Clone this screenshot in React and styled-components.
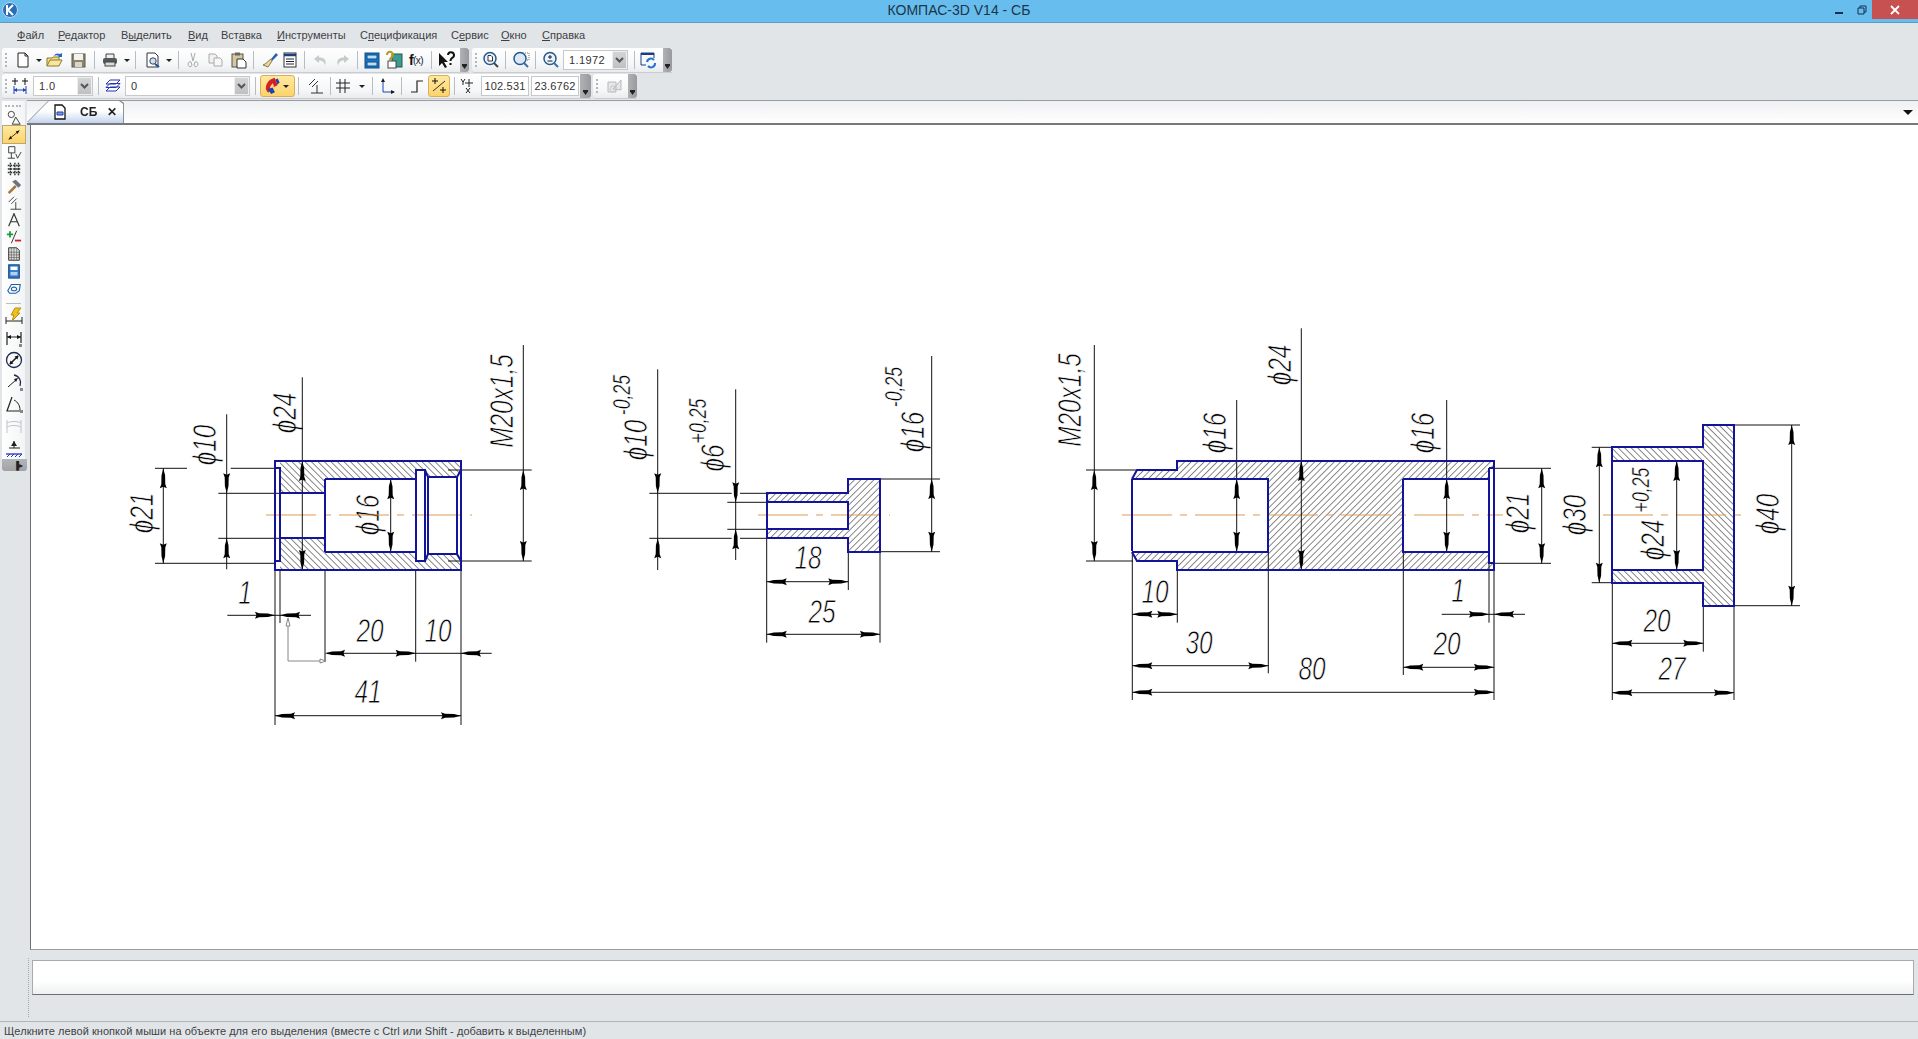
import React from "react";
import styled, { createGlobalStyle } from "styled-components";

const GlobalStyle = createGlobalStyle`
  html, body { margin: 0; padding: 0; background: #e2e5e8; overflow: hidden; }
  * { box-sizing: border-box; }
`;

const Win = styled.div`
  width: 1918px;
  height: 1039px;
  display: flex;
  flex-direction: column;
  background: #e2e5e8;
  font-family: "Liberation Sans", Arial, sans-serif;
  color: #333;
  overflow: hidden;
`;

// title bar
const TitleBar = styled.div`
  height: 23px;
  flex: none;
  display: flex;
  align-items: flex-start;
  justify-content: space-between;
  background: #67bdee;
  border-bottom: 1px solid #5a9cc4;
`;
const AppIcon = styled.div`
  width: 92px;
  height: 20px;
  padding: 2px 0 0 2px;
`;
const Title = styled.div`
  font-size: 14px;
  line-height: 21px;
  color: #1c3648;
`;
const WinBtns = styled.div`
  display: flex;
  align-items: flex-start;
  width: 92px;
`;
const WinBtn = styled.div`
  width: ${(p) => p.$w}px;
  height: 19px;
  display: flex;
  align-items: center;
  justify-content: center;
  background: ${(p) => p.$bg || "transparent"};
`;

// menu
const MenuBar = styled.div`
  height: 24px;
  flex: none;
  display: flex;
  align-items: center;
  padding-left: 17px;
  font-size: 11px;
  color: #3d4144;
`;
const MenuItem = styled.span`
  width: ${(p) => p.$w}px;
  flex: none;
  white-space: nowrap;
`;

// toolbars
const ToolStack = styled.div`
  flex: none;
  padding-top: 1px;
`;
const ToolRow = styled.div`
  height: 26px;
  display: flex;
  align-items: stretch;
  padding-left: 2px;
  gap: ${(p) => p.$gap || 0}px;
`;
const ToolGroup = styled.div`
  height: 25px;
  display: flex;
  align-items: center;
  background: linear-gradient(#ffffff, #f5f6f7 70%, #e9ebed);
  border-radius: 3px 0 0 3px;
  border-bottom: 1px solid #c9ccd0;
`;
const Grip = styled.div`
  width: ${(p) => p.$w}px;
  height: 100%;
  flex: none;
  position: relative;
  &::before {
    content: "";
    position: absolute;
    left: 3px;
    top: 5px;
    bottom: 5px;
    border-left: 2px dotted #b4b7ba;
  }
`;
const EndGrip = styled.div`
  width: ${(p) => p.$w}px;
  height: 100%;
  flex: none;
  background: linear-gradient(90deg, #b0b2b5, #97999c);
  border-radius: 0 3px 3px 0;
  display: flex;
  align-items: flex-end;
  justify-content: center;
  padding-bottom: 3px;
  &::after {
    content: "";
    width: 5px;
    height: 5px;
    clip-path: polygon(0 0, 100% 0, 100% 30%, 50% 100%, 0 30%);
    background-color: #222;
  }
`;
const Btn = styled.div`
  width: ${(p) => p.$w}px;
  height: ${(p) => p.$h || 22}px;
  flex: none;
  display: flex;
  align-items: center;
  justify-content: center;
  ${(p) =>
    p.$on &&
    `background: linear-gradient(#ffe9a0, #fdd36a);
     border: 1px solid #d9ae5c;
     border-radius: 3px;`}
`;
const FxBtn = styled(Btn)`
  font-size: 10px;
  color: #223;
  letter-spacing: -0.6px;
  white-space: nowrap;
  b {
    font-size: 14px;
    color: #111;
  }
`;
const Sep = styled.div`
  width: ${(p) => p.$w}px;
  height: 18px;
  flex: none;
  display: flex;
  justify-content: center;
  &::before {
    content: "";
    width: 1px;
    background: #b9bcc0;
  }
`;
const Pad = styled.div`
  width: ${(p) => p.$w}px;
  flex: none;
`;
const DropArrow = styled.div`
  width: ${(p) => p.$w}px;
  flex: none;
  display: flex;
  justify-content: center;
  &::before {
    content: "";
    flex: none;
    border-left: 3px solid transparent;
    border-right: 3px solid transparent;
    border-top: 3px solid #222;
  }
`;
const Combo = styled.div`
  width: ${(p) => p.$w}px;
  height: 20px;
  flex: none;
  display: flex;
  background: #fff;
  border: 1px solid #c6c8ca;
  font-size: 11px;
  line-height: 18px;
  color: #333;
`;
const ComboText = styled.div`
  flex: 1;
  padding-left: 5px;
  letter-spacing: 0.4px;
  white-space: nowrap;
`;
const ComboBtn = styled.div`
  width: 15px;
  flex: none;
  background: linear-gradient(#d4d5d7, #bfc0c2);
  border: 1px solid #eee;
  display: flex;
  align-items: center;
  justify-content: center;
`;
const Field = styled.div`
  width: ${(p) => p.$w}px;
  height: 20px;
  flex: none;
  background: #fff;
  border: 1px solid #c6c8ca;
  font-size: 11px;
  line-height: 18px;
  text-align: center;
  letter-spacing: 0.2px;
  color: #333;
`;

// workspace
const Work = styled.div`
  flex: 1;
  min-height: 0;
  display: flex;
`;
const LeftStrip = styled.div`
  width: 27px;
  flex: none;
  padding-left: 2px;
`;
const LeftTools = styled.div`
  width: 23px;
  background: linear-gradient(90deg, #fff, #f3f4f5);
  padding-top: 8px;
  margin-top: 1px;
  display: flex;
  flex-direction: column;
  align-items: center;
  position: relative;
  &::before {
    content: "";
    position: absolute;
    top: 4px;
    left: 3px;
    right: 4px;
    border-top: 2px dotted #b4b7ba;
  }
`;
const LeftBtn = styled.div`
  width: 22px;
  height: ${(p) => p.$h}px;
  flex: none;
  display: flex;
  align-items: center;
  justify-content: center;
  ${(p) =>
    p.$on &&
    `background: linear-gradient(#ffe9a0, #fdd36a);
     outline: 1px solid #b9a96f;`}
`;
const LeftSep = styled.div`
  width: 15px;
  height: 8px;
  flex: none;
  border-bottom: 1px solid #b9bcc0;
  margin-bottom: 1px;
`;
const LeftEnd = styled.div`
  width: 25px;
  height: 12px;
  background: linear-gradient(#b4b6b9, #9fa1a4);
  border-radius: 0 0 3px 3px;
  display: flex;
  align-items: center;
  justify-content: flex-end;
  padding-right: 4px;
  color: #222;
  font-size: 8px;
`;
const MainCol = styled.div`
  flex: 1;
  min-width: 0;
  display: flex;
  flex-direction: column;
`;
const TabBar = styled.div`
  height: 25px;
  flex: none;
  display: flex;
  align-items: flex-end;
  justify-content: space-between;
  background: linear-gradient(#eff0f2, #ffffff);
  border-top: 1px solid #9b9c9e;
  border-bottom: 2px solid #77797b;
`;
const TabEdge = styled.div`
  filter: drop-shadow(0 -1px 0 #8e9296) drop-shadow(1px 0 0 #8e9296);
`;
const Tab = styled.div`
  width: 96px;
  height: 22px;
  display: flex;
  align-items: center;
  padding-left: 26px;
  background: linear-gradient(#ffffff 45%, #c3d4ef);
  clip-path: polygon(0 100%, 22px 0, 92px 0, 96px 3px, 96px 100%);
  font-size: 12px;
  font-weight: bold;
  color: #222;
`;
const TabName = styled.span`
  margin-left: 13px;
`;
const TabClose = styled.span`
  margin-left: 10px;
  font-size: 12px;
`;
const TabMenu = styled.div`
  margin: 0 5px 8px 0;
  border-left: 5px solid transparent;
  border-right: 5px solid transparent;
  border-top: 5px solid #111;
`;
const Canvas = styled.div`
  flex: 1;
  min-height: 0;
  background: #fff;
  border-left: 1px solid #6d6f72;
  margin-left: 3px;
  border-bottom: 1px solid #9b9d9f;
`;
const Sheet = styled.svg`
  display: block;
  width: 100%;
  height: 100%;
`;
const Label = styled.text`
  font-family: "Liberation Sans", Arial, sans-serif;
  font-style: italic;
  fill: #000;
  stroke: #fff;
  stroke-width: ${(p) => p.$thin};
  text-anchor: middle;
  dominant-baseline: central;
`;

// command and status
const CommandRow = styled.div`
  height: 71px;
  flex: none;
  padding: 10px 4px 0 32px;
  position: relative;
  &::before {
    content: "";
    position: absolute;
    left: 28px;
    top: 8px;
    bottom: 4px;
    border-left: 1px dotted #a6a8ab;
  }
`;
const CommandBox = styled.div`
  height: 35px;
  background: linear-gradient(#ffffff 60%, #eef0f1);
  border: 1px solid #a8aaac;
  border-bottom: 1px solid #6d6f72;
`;
const StatusBar = styled.div`
  height: 18px;
  flex: none;
  border-top: 1px solid #b2b4b6;
  font-size: 11px;
  line-height: 18px;
  letter-spacing: 0.05px;
  padding-left: 4px;
  color: #3e4144;
`;

const Ic = styled.svg`
  display: block;
  flex: none;
  overflow: visible;
`;

const I = ({ s = 18, children }) => (
  <Ic width={s} height={s} viewBox="0 0 18 18" fill="none" strokeWidth="1">
    {children}
  </Ic>
);

const icons = {
  doc: <path d="M4 2h7l3 3v11H4zM11 2v3h3" stroke="#222" fill="#fff" />,
  open: (
    <>
      <path d="M1 15V7h5l1-1h6v3" stroke="#8d7a2c" fill="#f5dd86" />
      <path d="M1 15l3-6h12l-3 6z" stroke="#8d7a2c" fill="#f8e6a0" />
      <path d="M8 5c1-3 4-3 6-2l2-1v4h-4l1-1c-2-1-3-1-5 0z" fill="#2369c2" />
    </>
  ),
  save: (
    <>
      <rect x="3" y="3" width="13" height="13" fill="#8b8570" stroke="#5f5b4a" />
      <rect x="5" y="3" width="9" height="6" fill="#f2f2ee" />
      <rect x="6" y="11" width="7" height="5" fill="#d9d6c8" />
    </>
  ),
  print: (
    <>
      <path d="M5 7V3h8v4" stroke="#444" fill="#eee" />
      <rect x="2" y="7" width="14" height="6" rx="2" fill="#55585a" />
      <rect x="4" y="11" width="10" height="4" fill="#d9dadb" stroke="#444" />
    </>
  ),
  preview: (
    <>
      <path d="M3 2h8l3 3v11H3z" stroke="#334" fill="#fff" />
      <circle cx="9" cy="10" r="3.2" stroke="#345" fill="#cfe0f2" />
      <path d="M11 13l4 3" stroke="#1b4e93" strokeWidth="2" />
    </>
  ),
  cut: (
    <path d="M7 2l2 8M11 2L9 10M7 11a2 2.500 0 1 0 1 3zM11 11a2 2.500 0 1 1-1 3z" stroke="#a8aaac" />
  ),
  copy: (
    <>
      <path d="M3 3h6l2 2v7H3z" stroke="#aaa" fill="#f2f2f2" />
      <path d="M8 7h6l2 2v6H8z" stroke="#aaa" fill="#f7f7f7" />
    </>
  ),
  paste: (
    <>
      <rect x="3" y="3" width="11" height="13" stroke="#555" fill="#d6c89b" />
      <rect x="6" y="1.500" width="5" height="3" fill="#666" />
      <path d="M8 8h6l3 3v6H8z" stroke="#333" fill="#fff" />
    </>
  ),
  brush: (
    <>
      <path d="M10 8l5-6 2 2-6 6z" fill="#2c5fa8" />
      <path d="M10 8l1 2-4 6-5-2c3-1 5-4 8-6z" fill="#e9d69a" stroke="#8c7b45" />
    </>
  ),
  table: (
    <>
      <rect x="3" y="2" width="12" height="14" stroke="#333" fill="#fff" />
      <path d="M3 4h12" stroke="#1d3f7c" strokeWidth="2.500" />
      <path d="M5 8h8M5 10.500h8M5 13h8" stroke="#223" />
    </>
  ),
  undo: <path d="M6 4L1 8l5 4V9.500c3 0 5 1 6 5 2-6-1-8-6-8z" fill="#c9cacb" />,
  redo: <path d="M12 4l5 4-5 4V9.500c-3 0-5 1-6 5-2-6 1-8 6-8z" fill="#c9cacb" />,
  cabinet: (
    <>
      <rect x="2" y="2" width="14" height="15" fill="#1b78c4" stroke="#0d4d88" />
      <rect x="4" y="4" width="10" height="4" fill="#bcdcf4" stroke="#0d4d88" />
      <rect x="4" y="11" width="10" height="4" fill="#bcdcf4" stroke="#0d4d88" />
    </>
  ),
  tree: (
    <>
      <rect x="7" y="3" width="10" height="13" fill="#3b9c8f" stroke="#1d5b56" />
      <rect x="3" y="10" width="8" height="7" fill="#fff" stroke="#444" />
      <path d="M2 4a3 3 0 1 1 5 2c-1 1-2 1-2 3" stroke="#b89a18" strokeWidth="2" />
    </>
  ),
  help: (
    <>
      <path d="M2 2v13l3-3 3 5 2-1-3-5h4z" fill="#111" />
      <path d="M11 4a3 3 0 1 1 4 3c-1 1-1.500 1-1.500 3M13.500 12v2" stroke="#111" strokeWidth="2" />
    </>
  ),
  zoomDoc: (
    <>
      <circle cx="8" cy="7.500" r="6" stroke="#245a8e" fill="#edf3fa" strokeWidth="1.500" />
      <path d="M6 4.500h3l1.500 1.500v4H6z" stroke="#333" fill="#fff" />
      <path d="M12 12l4 4" stroke="#444" strokeWidth="2" />
    </>
  ),
  zoomBox: (
    <>
      <circle cx="8" cy="7.500" r="6" stroke="#245a8e" fill="#dbe8f6" strokeWidth="1.500" />
      <path d="M11 2h6v7h-5" stroke="#777" strokeDasharray="1 1" />
      <path d="M12 12l4 4" stroke="#3f6fa6" strokeWidth="2" />
    </>
  ),
  zoomPm: (
    <>
      <circle cx="8" cy="7.500" r="6" stroke="#245a8e" fill="#edf3fa" strokeWidth="1.500" />
      <path d="M8 4v4M6 6h4M5.500 10h5" stroke="#123" />
      <path d="M12 12l4 4" stroke="#3f6fa6" strokeWidth="2" />
    </>
  ),
  refresh: (
    <>
      <path d="M2 2h13v5M2 2v12h5" stroke="#1d3f7c" />
      <path d="M2 2h13v2H2z" fill="#1d3f7c" />
      <path d="M8 11a4 4 0 0 1 7-2M16 12a4 4 0 0 1-7 3" stroke="#2276d2" strokeWidth="2" />
    </>
  ),
  snapStep: (
    <>
      <path d="M4 1v7M1 4h6M14 1v7M11 4h6" stroke="#111" />
      <path d="M3 9v8M15 9v8M3 13h12" stroke="#1f3fb8" />
      <path d="M3 13l3-2v4zM15 13l-3-2v4z" fill="#1f3fb8" />
    </>
  ),
  layers: (
    <path d="M2 14l4-4h10l-4 4zM2 10.500l4-4h10l-4 4zM2 7l4-4h10l-4 4z" stroke="#2434b8" fill="#fff" />
  ),
  magnet: (
    <>
      <path d="M5 14 C1 10 4 4 11 2" stroke="#d42020" strokeWidth="4.500" />
      <path d="M13 8C9 8 8 10 9.500 13" stroke="#fdd36a" strokeWidth="1" />
      <path d="M11 2l2.500 5.500-4 2-1-4z" fill="#d42020" />
      <path d="M3 12l5-2 2.500 5-4 2z" fill="#1f3fb8" />
      <path d="M11 1.500l2.500-1 2 4.500-2.500 1.500z" fill="#1f3fb8" />
    </>
  ),
  parallel: <path d="M3 8l6-6M6 10l6-6M11 8v8M5 16h12" stroke="#333" />,
  grid: <path d="M5 2v14M10 2v14M1 6h14M1 11h14" stroke="#222" />,
  axes: (
    <>
      <path d="M5 15V3M5 15h11" stroke="#1f3fb8" />
      <path d="M5 1l-2 4h4z" fill="#1a1a1a" />
      <path d="M17 15l-4-2v4z" fill="#1a1a1a" />
    </>
  ),
  step: <path d="M3 15h6V4h6" stroke="#222" strokeWidth="1.200" />,
  snapDiag: (
    <>
      <path d="M3 14L15 4" stroke="#333" />
      <path d="M5 1v6M2 4h6M13 10v6M10 13h6" stroke="#111" />
    </>
  ),
  xy: (
    <path d="M10 2v8M6 6h8M2 2l2 3 2-3M4 5v3M7 11l4 5M11 11l-4 5" stroke="#222" />
  ),
  ghost: (
    <>
      <path d="M3 5h8v10H3zM8 12l8-9v10z" stroke="#bbb" fill="#e5e6e7" />
      <circle cx="8" cy="12" r="3" stroke="#c9c9c9" />
    </>
  ),
  shapes: (
    <>
      <circle cx="6" cy="5" r="3.500" stroke="#333" />
      <path d="M11 8l5 8H7z" stroke="#333" />
    </>
  ),
  dimOn: (
    <>
      <path d="M3 14L15 4" stroke="#222" />
      <path d="M15 4l-4 1 2 3zM3 14l4-1-2-3z" fill="#111" />
    </>
  ),
  rough: (
    <>
      <path d="M3 3h7v7H3zM6 10v6M2 16h8M11 11l2 5 4-7" stroke="#333" />
    </>
  ),
  points: (
    <path d="M5 2v14M10 2v14M14 2v14M2 5h14M2 9h14M2 13h14" stroke="#333" strokeWidth="1.600" strokeDasharray="2 1" />
  ),
  hammer: (
    <>
      <path d="M2 16l8-8 2 2-8 8z" fill="#a6763a" />
      <path d="M7 4l4-2 6 6-3 3z" fill="#6f7277" />
    </>
  ),
  compass: <path d="M9 2L3 16M9 2l6 14M5 11h8M9 1v3" stroke="#333" strokeWidth="1.300" />,
  plusMinus: (
    <>
      <path d="M1 6h7M4.500 2.500v7" stroke="#1f9a3b" strokeWidth="2" />
      <path d="M10 13h7" stroke="#d01f1f" strokeWidth="2" />
      <path d="M12 2L6 16" stroke="#222" />
    </>
  ),
  sheet: (
    <>
      <path d="M3 2h9l3 3v11H3z" stroke="#222" fill="#ddd" />
      <path d="M6 2v14M9 2v14M12 2v14M3 7h12M3 10h12M3 13h12" stroke="#555" strokeWidth="0.700" />
    </>
  ),
  panel: (
    <>
      <rect x="3" y="2" width="12" height="15" fill="#2a78c8" stroke="#123c78" />
      <rect x="5" y="4" width="8" height="4" fill="#fff" />
      <rect x="5" y="10" width="8" height="4" fill="#b5cff0" />
    </>
  ),
  ring: (
    <path d="M2 12l4-7h10l-1 7-4 3H4zM6 10a3 2 0 1 0 6 0a3 2 0 1 0-6 0" stroke="#1f5fa8" strokeWidth="1.200" />
  ),
  bolt: (
    <>
      <path d="M1 10v7M17 10v7M1 14h16" stroke="#222" />
      <path d="M10 1h6l-4 5h3l-8 8 2-6H6z" fill="#f0c020" stroke="#b89010" />
    </>
  ),
  linear: (
    <>
      <path d="M2 3v13h0M16 3v11M2 8h14" stroke="#222" strokeWidth="1.200" />
      <path d="M2 8l4-2v4zM16 8l-4-2v4z" fill="#111" />
      <path d="M14 15h3v3h-3z" fill="#888" />
    </>
  ),
  circleDim: (
    <>
      <circle cx="9" cy="9" r="7.500" stroke="#1c2a50" strokeWidth="1.300" />
      <path d="M5 13L13 5" stroke="#111" strokeWidth="1.500" />
      <path d="M13.500 4.500l-4 1 3 3zM4.500 13.500l4-1-3-3z" fill="#111" />
    </>
  ),
  radius: (
    <>
      <path d="M3 14L12 6" stroke="#222" />
      <path d="M13 5l-4 1 2 3z" fill="#111" />
      <path d="M9 2a8 8 0 0 1 6 11" stroke="#1c2a50" strokeWidth="1.300" />
      <path d="M15 15h3v3h-3z" fill="#888" />
    </>
  ),
  angle: (
    <>
      <path d="M7 2L2 16h13" stroke="#222" strokeWidth="1.200" />
      <path d="M9 5c4 2 6 6 6 10" stroke="#222" />
      <path d="M15 15h3v3h-3z" fill="#888" />
    </>
  ),
  chainOff: <path d="M2 3v13M16 3v13M2 6c4-2 10-2 14 0M2 10c4-2 10-2 14 0" stroke="#c2c3c5" />,
  base: (
    <>
      <path d="M9 2v7M4 9h11" stroke="#222" />
      <path d="M9 2l-3 5h6z" fill="#222" />
      <path d="M1 15h16" stroke="#2434b8" strokeWidth="1.300" />
      <path d="M2 18l3-3M6 18l3-3M10 18l3-3M14 18l3-3" stroke="#2434b8" />
    </>
  ),
};

const Icon = ({ n, s }) => <I s={s}>{icons[n]}</I>;

const Chevron = () => (
  <Ic width="9" height="7" viewBox="0 0 9 7" fill="none">
    <path d="M1 1l3.500 3.500L8 1" stroke="#555" strokeWidth="2" />
  </Ic>
);

const menu = [
  ["", "Ф", "айл", 41],
  ["", "Р", "едактор", 63],
  ["В", "ы", "делить", 67],
  ["", "В", "ид", 33],
  ["Вст", "а", "вка", 56],
  ["", "И", "нструменты", 83],
  ["С", "п", "ецификация", 91],
  ["С", "е", "рвис", 50],
  ["", "О", "кно", 41],
  ["", "С", "правка", 50],
];

const leftTop = ["shapes", "dimOn", "rough", "points", "hammer", "parallel", "compass", "plusMinus", "sheet", "panel", "ring"];
const leftBottom = ["bolt", "linear", "circleDim", "radius", "angle", "chainOff", "base"];

// drawing data, in page coordinates
const thin = [
  // part 1
  [163.3, 468.3, 163.3, 563.3], [155, 468.3, 187, 468.3], [230.7, 468.3, 275, 468.3], [155, 563.3, 275, 563.3],
  [226.7, 414.3, 226.7, 569.3], [218.3, 493.3, 280, 493.3], [218.3, 538.3, 280, 538.3],
  [302.3, 377.3, 302.3, 569.3], [390.7, 479.3, 390.7, 551.7],
  [523.3, 345, 523.3, 561], [448, 470, 531.7, 470], [448, 561, 531.7, 561],
  [227.3, 615.3, 311, 615.3], [275, 570, 275, 725], [280, 570, 280, 623], [325, 570, 325, 661.7], [415.7, 570, 415.7, 661.7], [461, 570, 461, 725],
  [326.7, 653.3, 491.7, 653.3], [275, 715.7, 461, 715.7],
  // part 2
  [657.7, 369.3, 657.7, 570], [649.3, 493.3, 731.7, 493.3], [740, 493.3, 766.7, 493.3], [649.3, 538.3, 731.7, 538.3], [740, 538.3, 766.7, 538.3],
  [735.7, 389.3, 735.7, 560], [727.3, 502.3, 766.7, 502.3], [727.3, 529.3, 766.7, 529.3],
  [931.7, 356, 931.7, 551.7], [880, 479, 940, 479], [880, 551.7, 940, 551.7],
  [766.7, 538, 766.7, 642.7], [848.3, 552, 848.3, 590], [880, 552, 880, 642.7], [766.7, 581.7, 848.3, 581.7], [766.7, 634.3, 880, 634.3],
  // part 3
  [1094.3, 345, 1094.3, 561], [1086, 470, 1136.7, 470], [1086, 561, 1133, 561],
  [1236.7, 400, 1236.7, 551.7], [1301.3, 328.3, 1301.3, 570], [1446.7, 400, 1446.7, 551.7],
  [1541.7, 468.3, 1541.7, 563.3], [1494, 468.3, 1551, 468.3], [1494, 563.3, 1551, 563.3],
  [1132.3, 552, 1132.3, 700], [1177.3, 560, 1177.3, 622.7], [1268.3, 552, 1268.3, 673.3], [1403.3, 552, 1403.3, 675], [1494, 570, 1494, 700], [1489, 563, 1489, 622.7],
  [1132.3, 614.3, 1177.3, 614.3], [1441.7, 614.3, 1525, 614.3], [1132.3, 665.7, 1268.3, 665.7], [1132.3, 692.3, 1494, 692.3], [1403.3, 667.3, 1494, 667.3],
  // part 4
  [1599.3, 447.3, 1599.3, 582.7], [1591.7, 447.3, 1612, 447.3], [1591.7, 582.7, 1612, 582.7],
  [1676.7, 461, 1676.7, 570], [1791.7, 425, 1791.7, 605.7], [1734, 425, 1800, 425], [1734, 605.7, 1800, 605.7],
  [1612.3, 583, 1612.3, 700], [1703.3, 583, 1703.3, 651.7], [1734, 606, 1734, 700], [1612.3, 643.3, 1703.3, 643.3], [1612.3, 692.7, 1734, 692.7],
];

// x, y of the tip, direction
const arrows = [
  [163.3, 468.3, "u"], [163.3, 563.3, "d"], [226.7, 493.3, "d"], [226.7, 538.3, "u"], [302.3, 461, "u"], [302.3, 570, "d"],
  [390.7, 479.3, "u"], [390.7, 551.7, "d"], [523.3, 470, "u"], [523.3, 561, "d"],
  [275, 615.3, "r"], [280, 615.3, "l"], [325, 653.3, "l"], [415.7, 653.3, "r"], [461, 653.3, "l"], [275, 715.7, "l"], [461, 715.7, "r"],
  [657.7, 493.3, "d"], [657.7, 538.3, "u"], [735.7, 502.3, "d"], [735.7, 529.3, "u"], [931.7, 479, "u"], [931.7, 551.7, "d"],
  [766.7, 581.7, "l"], [848.3, 581.7, "r"], [766.7, 634.3, "l"], [880, 634.3, "r"],
  [1094.3, 470, "u"], [1094.3, 561, "d"], [1236.7, 479, "u"], [1236.7, 551.7, "d"], [1301.3, 461, "u"], [1301.3, 570, "d"],
  [1446.7, 479, "u"], [1446.7, 551.7, "d"], [1541.7, 468.3, "u"], [1541.7, 563.3, "d"],
  [1132.3, 614.3, "l"], [1177.3, 614.3, "r"], [1489, 614.3, "r"], [1494, 614.3, "l"], [1132.3, 665.7, "l"], [1268.3, 665.7, "r"],
  [1132.3, 692.3, "l"], [1494, 692.3, "r"], [1403.3, 667.3, "l"], [1494, 667.3, "r"],
  [1599.3, 447.3, "u"], [1599.3, 582.7, "d"], [1676.7, 461, "u"], [1676.7, 570, "d"], [1791.7, 425, "u"], [1791.7, 605.7, "d"],
  [1612.3, 643.3, "l"], [1703.3, 643.3, "r"], [1612.3, 692.7, "l"], [1734, 692.7, "r"],
];

// text, x, y, rotated, size
const labels = [
  ["ϕ21", 142, 513, 1, 33], ["ϕ10", 205, 445, 1, 33], ["ϕ24", 285, 413, 1, 33], ["ϕ16", 368, 515, 1, 33], ["M20x1,5", 502, 401, 1, 33],
  ["1", 245, 593, 0, 33], ["20", 370, 631, 0, 33], ["10", 438, 631, 0, 33], ["41", 368, 692, 0, 33],
  ["ϕ10", 636, 440, 1, 33], ["-0,25", 621, 395, 1, 24], ["ϕ6", 713, 458, 1, 33], ["+0,25", 697, 421, 1, 24], ["ϕ16", 913, 432, 1, 33], ["-0,25", 893, 387, 1, 24],
  ["18", 808, 558, 0, 33], ["25", 822, 612, 0, 33],
  ["M20x1,5", 1070, 400, 1, 33], ["ϕ16", 1215, 433, 1, 33], ["ϕ24", 1280, 365, 1, 33], ["ϕ16", 1423, 433, 1, 33], ["ϕ21", 1518, 513, 1, 33],
  ["10", 1155, 592, 0, 33], ["1", 1458, 591, 0, 33], ["30", 1199, 643, 0, 33], ["80", 1312, 669, 0, 33], ["20", 1447, 644, 0, 33],
  ["ϕ30", 1575, 515, 1, 33], ["ϕ24", 1653, 540, 1, 33], ["+0,25", 1640, 490, 1, 24], ["ϕ40", 1768, 514, 1, 33], ["20", 1657, 621, 0, 33], ["27", 1672, 669, 0, 33],
];

const rot = { u: 0, d: 180, r: 90, l: -90 };
const Arrow = ({ x, y, d }) => (
  <path
    d="M0 0L1 4L1.800 7L2 16L3.500 20L0 18.500L-3.500 20L-2 16L-1.800 7L-1 4Z"
    fill="#000"
    transform={`translate(${x} ${y}) rotate(${rot[d]})`}
  />
);

const hatchBack = [
  "M280 462H461V470L457 477H428L425 470H416V479H325V493H280Z",
  "M280 569H461V561L457 554H428L425 561H416V552H325V538H280Z",
  "M1612 448H1703V426H1734V605H1703V582H1612V570H1703V461H1612Z",
];
const hatchFwd = [
  "M767 494H848V479H880V552H848V538H767V529H848V502H767Z",
  "M1137 470H1177V461H1494V468H1489V563H1494V570H1177V561H1137L1133 552H1268V479H1133ZM1403 479H1489V552H1403Z",
];
const blue = [
  "M275 461H461V570H275ZM275 468H280V561H275M280 493H325M280 538H325M325 479V552M325 479H416M325 552H416M416 470H425V561H416ZM425 470L428 477V554L425 561M428 477H457L461 470M428 554H457L461 561M457 477V554",
  "M767 493H848V479H880V552H848V538H767ZM767 502H848V529H767",
  "M1132 479V551M1132 479L1137 470H1177V461H1494V570H1177V561H1137L1132 552M1132 479H1268V552H1132M1403 479V552H1489M1403 479H1489M1489 468H1494M1489 468V563H1494",
  "M1612 447H1703V425H1734V606H1703V583H1612ZM1612 461H1703V570H1612",
];
const axis = [
  [266, 515, 472], [758, 515, 890], [1122, 515, 1503], [1603, 515, 1743],
];

const Drawing = () => (
  <Sheet viewBox="31 125 1887 824" preserveAspectRatio="xMinYMin slice">
    <defs>
      <pattern id="hb" width="4.600" height="4.600" patternUnits="userSpaceOnUse" patternTransform="rotate(45)">
        <path d="M0 0H4.600" stroke="#111" strokeWidth="1" />
      </pattern>
      <pattern id="hf" width="4.600" height="4.600" patternUnits="userSpaceOnUse" patternTransform="rotate(-45)">
        <path d="M0 0H4.600" stroke="#111" strokeWidth="1" />
      </pattern>
    </defs>
    {labels.map(([t, x, y, r, s], i) => (
      <Label
        key={i}
        $thin={s > 25 ? 0.8 : 0.4}
        fontSize={s}
        transform={`translate(${x} ${y}) rotate(${r ? -90 : 0}) scale(0.74 1)`}
      >
        {t}
      </Label>
    ))}
    {hatchBack.map((d, i) => <path key={i} d={d} fill="url(#hb)" />)}
    {hatchFwd.map((d, i) => <path key={i} d={d} fill="url(#hf)" fillRule="evenodd" />)}
    {axis.map(([x1, y, x2], i) => (
      <line key={i} x1={x1} y1={y} x2={x2} y2={y} stroke="#df9a52" strokeDasharray="50 8 7 8" />
    ))}
    {thin.map(([x1, y1, x2, y2], i) => (
      <line key={i} x1={x1} y1={y1} x2={x2} y2={y2} stroke="#111" />
    ))}
    {arrows.map(([x, y, d], i) => <Arrow key={i} x={x} y={y} d={d} />)}
    {blue.map((d, i) => <path key={i} d={d} fill="none" stroke="#14149a" strokeWidth="2" />)}
    <path d="M288 661V620M288 661H326" stroke="#888" fill="none" />
    <path d="M288 618l-2 8h4zM326 661l-6-2v4z" fill="#fff" stroke="#888" />
  </Sheet>
);

export default function App() {
  return (
    <Win>
      <GlobalStyle />
      <TitleBar>
        <AppIcon>
          <Ic width="16" height="16" viewBox="0 0 16 16">
            <circle cx="8" cy="8" r="7.500" fill="#2a6fb5" stroke="#bcd8f0" />
            <path d="M5 3v10M11 3L6 8l5 5" stroke="#fff" strokeWidth="2" fill="none" />
          </Ic>
        </AppIcon>
        <Title>КОМПАС-3D V14 - СБ</Title>
        <WinBtns>
          <WinBtn $w={26}>
            <Ic width="10" height="10" viewBox="0 0 10 10"><path d="M1 8h8" stroke="#12324c" strokeWidth="2" /></Ic>
          </WinBtn>
          <WinBtn $w={20}>
            <Ic width="10" height="10" viewBox="0 0 10 10" fill="none"><path d="M1 3h6v6H1zM3 3V1h6v6H7" stroke="#12324c" /></Ic>
          </WinBtn>
          <WinBtn $w={46} $bg="#c75050">
            <Ic width="10" height="10" viewBox="0 0 10 10"><path d="M1 1l8 8M9 1l-8 8" stroke="#fff" strokeWidth="1.800" /></Ic>
          </WinBtn>
        </WinBtns>
      </TitleBar>

      <MenuBar>
        {menu.map(([a, u, b, w]) => (
          <MenuItem key={a + u + b} $w={w}>{a}<u>{u}</u>{b}</MenuItem>
        ))}
      </MenuBar>

      <ToolStack>
        <ToolRow $gap={3}>
          <ToolGroup>
            <Grip $w={12} />
            <Btn $w={18}><Icon n="doc" /></Btn>
            <DropArrow $w={14} />
            <Btn $w={18}><Icon n="open" /></Btn>
            <Btn $w={28}><Icon n="save" /></Btn>
            <Sep $w={4} />
            <Btn $w={28}><Icon n="print" /></Btn>
            <DropArrow $w={6} />
            <Sep $w={10} />
            <Btn $w={26}><Icon n="preview" /></Btn>
            <DropArrow $w={6} />
            <Sep $w={12} />
            <Btn $w={18}><Icon n="cut" /></Btn>
            <Btn $w={26}><Icon n="copy" /></Btn>
            <Btn $w={20}><Icon n="paste" /></Btn>
            <Sep $w={10} />
            <Btn $w={24}><Icon n="brush" /></Btn>
            <Btn $w={16}><Icon n="table" /></Btn>
            <Sep $w={12} />
            <Btn $w={24}><Icon n="undo" /></Btn>
            <Btn $w={14}><Icon n="redo" /></Btn>
            <Sep $w={18} />
            <Btn $w={12}><Icon n="cabinet" /></Btn>
            <Btn $w={32}><Icon n="tree" /></Btn>
            <FxBtn $w={12}><b>f</b>(x)</FxBtn>
            <Sep $w={18} />
            <Btn $w={12}><Icon n="help" /></Btn>
            <Pad $w={8} />
            <EndGrip $w={9} />
          </ToolGroup>
          <ToolGroup>
            <Grip $w={10} />
            <Btn $w={18}><Icon n="zoomDoc" /></Btn>
            <Sep $w={10} />
            <Btn $w={22}><Icon n="zoomBox" /></Btn>
            <Sep $w={6} />
            <Btn $w={25}><Icon n="zoomPm" /></Btn>
            <Combo $w={65}>
              <ComboText>1.1972</ComboText>
              <ComboBtn><Chevron /></ComboBtn>
            </Combo>
            <Sep $w={12} />
            <Btn $w={16}><Icon n="refresh" /></Btn>
            <Pad $w={7} />
            <EndGrip $w={9} />
          </ToolGroup>
        </ToolRow>

        <ToolRow $gap={2}>
          <ToolGroup>
            <Grip $w={10} />
            <Btn $w={16}><Icon n="snapStep" /></Btn>
            <Pad $w={5} />
            <Combo $w={60}>
              <ComboText>1.0</ComboText>
              <ComboBtn><Chevron /></ComboBtn>
            </Combo>
            <Sep $w={10} />
            <Btn $w={20}><Icon n="layers" /></Btn>
            <Pad $w={2} />
            <Combo $w={125}>
              <ComboText>0</ComboText>
              <ComboBtn><Chevron /></ComboBtn>
            </Combo>
            <Sep $w={10} />
            <Btn $w={35} $on>
              <Icon n="magnet" s={17} />
              <DropArrow $w={9} />
            </Btn>
            <Sep $w={6} />
            <Btn $w={28}><Icon n="parallel" /></Btn>
            <Sep $w={2} />
            <Btn $w={26}><Icon n="grid" /></Btn>
            <DropArrow $w={10} />
            <Sep $w={10} />
            <Btn $w={20}><Icon n="axes" /></Btn>
            <Sep $w={8} />
            <Btn $w={23}><Icon n="step" /></Btn>
            <Btn $w={22} $on><Icon n="snapDiag" /></Btn>
            <Sep $w={8} />
            <Btn $w={20}><Icon n="xy" /></Btn>
            <Pad $w={3} />
            <Field $w={48}>102.531</Field>
            <Pad $w={2} />
            <Field $w={48}>23.6762</Field>
            <Pad $w={1} />
            <EndGrip $w={11} />
          </ToolGroup>
          <ToolGroup>
            <Grip $w={11} />
            <Btn $w={20}><Icon n="ghost" /></Btn>
            <Pad $w={4} />
            <EndGrip $w={9} />
          </ToolGroup>
        </ToolRow>
      </ToolStack>

      <Work>
        <LeftStrip>
          <LeftTools>
            {leftTop.map((n, i) => (
              <LeftBtn key={n} $h={17} $on={i === 1}><Icon n={n} s={16} /></LeftBtn>
            ))}
            <LeftSep />
            {leftBottom.map((n) => (
              <LeftBtn key={n} $h={22}><Icon n={n} s={18} /></LeftBtn>
            ))}
          </LeftTools>
          <LeftEnd>▐▸</LeftEnd>
        </LeftStrip>
        <MainCol>
          <TabBar>
            <TabEdge>
              <Tab>
                <Ic width="14" height="16" viewBox="0 0 14 16" fill="none">
                  <path d="M2 1h7l3 3v11H2z" stroke="#111" strokeWidth="1.300" fill="#fff" />
                  <path d="M4 8h6v3H4z" fill="#7f94e0" stroke="#1f3fb8" />
                </Ic>
                <TabName>СБ</TabName>
                <TabClose>✕</TabClose>
              </Tab>
            </TabEdge>
            <TabMenu />
          </TabBar>
          <Canvas>
            <Drawing />
          </Canvas>
        </MainCol>
      </Work>

      <CommandRow>
        <CommandBox />
      </CommandRow>
      <StatusBar>Щелкните левой кнопкой мыши на объекте для его выделения (вместе с Ctrl или Shift - добавить к выделенным)</StatusBar>
    </Win>
  );
}
